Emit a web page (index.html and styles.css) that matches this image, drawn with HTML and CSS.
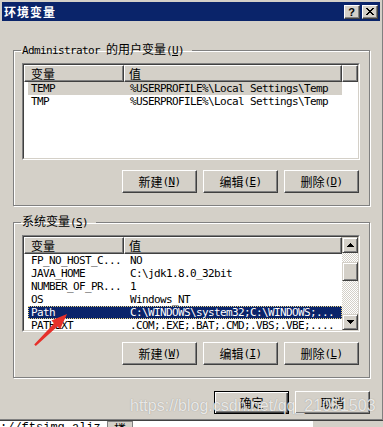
FILE: index.html
```html
<!DOCTYPE html>
<html lang="zh-CN">
<head>
<meta charset="utf-8">
<title>环境变量</title>
<link rel="stylesheet" href="styles.css">
</head>
<body>
<div class="window">
  <div class="titlebar">
    <span class="title">环境变量</span>
    <div class="tbtns">
      <span class="tbtn help">?</span>
      <span class="tbtn close"><svg width="8" height="7" viewBox="0 0 8 7" shape-rendering="crispEdges"><path d="M0 0h2v1h-2zM6 0h2v1h-2zM1 1h2v1h-2zM5 1h2v1h-2zM2 2h4v1h-4zM3 3h2v1h-2zM2 4h4v1h-4zM1 5h2v1h-2zM5 5h2v1h-2zM0 6h2v1h-2zM6 6h2v1h-2z" fill="#000"/></svg></span>
    </div>
  </div>
  <div class="dlg">
    <fieldset class="group">
      <legend><span class="m">Administrator </span>的用户变量<span class="m">(<u>U</u>)</span></legend>
      <div class="lv">
        <div class="lv-in">
          <div class="lv-main">
            <div class="lv-head"><span class="hc c1">变量</span><span class="hc c2">值</span><span class="hc fill"></span></div>
            <div class="row sel-gray"><span class="c1 m">TEMP</span><span class="c2 m">%USERPROFILE%\Local Settings\Temp</span></div>
            <div class="row"><span class="c1 m">TMP</span><span class="c2 m">%USERPROFILE%\Local Settings\Temp</span></div>
          </div>
        </div>
      </div>
      <div class="btnrow">
        <button class="btn">新建<span class="m">(<u>N</u>)</span></button>
        <button class="btn">编辑<span class="m">(<u>E</u>)</span></button>
        <button class="btn">删除<span class="m">(<u>D</u>)</span></button>
      </div>
    </fieldset>
    <fieldset class="group">
      <legend>系统变量<span class="m">(<u>S</u>)</span></legend>
      <div class="lv">
        <div class="lv-in">
          <div class="lv-main">
            <div class="lv-head"><span class="hc c1">变量</span><span class="hc c2">值</span></div>
            <div class="row"><span class="c1 m">FP_NO_HOST_C...</span><span class="c2 m">NO</span></div>
            <div class="row"><span class="c1 m">JAVA_HOME</span><span class="c2 m">C:\jdk1.8.0_32bit</span></div>
            <div class="row"><span class="c1 m">NUMBER_OF_PR...</span><span class="c2 m">1</span></div>
            <div class="row"><span class="c1 m">OS</span><span class="c2 m">Windows_NT</span></div>
            <div class="row sel"><span class="c1 m">Path</span><span class="c2 m">C:\WINDOWS\system32;C:\WINDOWS;...</span></div>
            <div class="row"><span class="c1 m">PATHEXT</span><span class="c2 m">.COM;.EXE;.BAT;.CMD;.VBS;.VBE;....</span></div>
          </div>
          <div class="sb">
            <span class="sbtn"><svg width="7" height="4" viewBox="0 0 7 4" shape-rendering="crispEdges"><path d="M3 0h1v1h-1zM2 1h3v1h-3zM1 2h5v1h-5zM0 3h7v1h-7z" fill="#000"/></svg></span>
            <div class="track"><div class="thumb"></div></div>
            <span class="sbtn"><svg width="7" height="4" viewBox="0 0 7 4" shape-rendering="crispEdges"><path d="M0 0h7v1h-7zM1 1h5v1h-5zM2 2h3v1h-3zM3 3h1v1h-1z" fill="#000"/></svg></span>
          </div>
        </div>
      </div>
      <div class="btnrow">
        <button class="btn">新建<span class="m">(<u>W</u>)</span></button>
        <button class="btn">编辑<span class="m">(<u>I</u>)</span></button>
        <button class="btn">删除<span class="m">(<u>L</u>)</span></button>
      </div>
    </fieldset>
    <div class="okrow">
      <button class="btn default">确定</button>
      <button class="btn">取消</button>
    </div>
  </div>
</div>
<div class="behind"><span class="b1">://ftsimg.aliz</span><span class="b2">楼</span><span class="b3"></span><span class="b4"></span></div>
<div class="watermark">https://blog.csdn.net/qq_21051503</div>
<svg class="arrow" width="40" height="40" viewBox="0 0 40 40"><polygon points="37,4 30.2,19.3 27.4,16.5 5.8,36 4.2,34.4 24.2,13.2 21.4,10.6" fill="#E6302A"/></svg>
</body>
</html>
```
FILE: styles.css
```css
* { box-sizing: border-box; }
html, body { margin: 0; padding: 0; }
body {
  width: 383px;
  height: 427px;
  overflow: hidden;
  position: relative;
  background: #fff;
  font-family: "Noto Sans CJK SC", sans-serif;
  font-size: 12px;
  color: #000;
}
.window {
  width: 386px;
  height: 423px;
  margin: -2px 0 0 -2px;
  background: #D4D0C8;
  border: 1px solid;
  border-color: #D4D0C8 #404040 #404040 #D4D0C8;
  box-shadow: inset 1px 1px #fff, inset -1px -1px #808080;
  padding: 3px;
  display: flex;
  flex-direction: column;
}
.titlebar {
  height: 19px;
  flex: none;
  background: #0A246A;
  display: flex;
  align-items: center;
  justify-content: space-between;
  padding: 0 2px;
}
.title {
  color: #fff;
  font-weight: 700;
  font-size: 12px;
  letter-spacing: 1px;
  line-height: 19px;
}
.tbtns { display: flex; gap: 2px; }
.tbtn {
  width: 16px;
  height: 14px;
  background: #D4D0C8;
  border: 1px solid;
  border-color: #fff #404040 #404040 #fff;
  box-shadow: inset -1px -1px #808080;
  display: flex;
  align-items: center;
  justify-content: center;
}
.help {
  font: bold 11px/12px "Liberation Sans", sans-serif;
  padding-right: 1px;
}
.dlg {
  flex: 1;
  padding: 22px 10px 0 11px;
}
fieldset.group {
  margin: 0;
  min-width: 0;
  padding: 6px 9px 12px 8px;
  border: 1px solid #808080;
  box-shadow: inset 1px 1px #fff, 1px 1px #fff;
}
fieldset.group + fieldset.group { margin-top: 9px; }
legend {
  padding: 0 8px 0 1px;
  margin-left: -1px;
  font-size: 12px;
  line-height: 12px;
  white-space: nowrap;
}
.m {
  font-family: "DejaVu Sans Mono", monospace;
  font-size: 11px;
  letter-spacing: -0.62px;
}
.lv {
  height: 97px;
  border: 1px solid;
  border-color: #808080 #fff #fff #808080;
}
.lv-in {
  height: 100%;
  border: 1px solid;
  border-color: #404040 #D4D0C8 #D4D0C8 #404040;
  background: #fff;
  display: flex;
  overflow: hidden;
}
.lv-main { flex: 1; min-width: 0; overflow: hidden; }
.lv-head { display: flex; height: 17px; }
.hc {
  height: 17px;
  background: #D4D0C8;
  border: 1px solid;
  border-color: #fff #404040 #404040 #fff;
  box-shadow: inset -1px -1px #808080;
  line-height: 15px;
  white-space: nowrap;
  flex: none;
}
.hc.c1 { width: 100px; padding-left: 6px; }
.hc.c2 { width: 218px; padding-left: 4px; }
.hc.fill { flex: 1; }
.row {
  display: flex;
  height: 13px;
  width: 314px;
  margin-left: 4px;
  line-height: 13px;
  white-space: nowrap;
}
.row .c1 { width: 96px; padding-left: 3px; overflow: hidden; flex: none; }
.row .c2 { width: 218px; padding-left: 6px; overflow: hidden; flex: none; }
.row.sel-gray { background: #D4D0C8; }
.row.sel {
  background: #0A246A;
  color: #fff;
  outline: 1px dotted #EBD57F;
  outline-offset: -1px;
}
.sb {
  width: 16px;
  flex: none;
  display: flex;
  flex-direction: column;
  background-color: #fff;
  background-image: conic-gradient(#D4D0C8 25%, #fff 0 50%, #D4D0C8 0 75%, #fff 0);
  background-size: 2px 2px;
}
.sbtn, .thumb {
  background: #D4D0C8;
  border: 1px solid;
  border-color: #D4D0C8 #404040 #404040 #D4D0C8;
  box-shadow: inset 1px 1px #fff, inset -1px -1px #808080;
}
.sbtn {
  width: 16px;
  height: 16px;
  flex: none;
  display: flex;
  align-items: center;
  justify-content: center;
}
.track { flex: 1; }
.thumb { height: 19px; margin-top: 9px; }
.btnrow {
  display: flex;
  justify-content: flex-end;
  gap: 6px;
  margin-top: 10px;
  padding-right: 1px;
}
.okrow {
  display: flex;
  justify-content: flex-end;
  gap: 6px;
  margin-top: 13px;
}
.btn {
  width: 75px;
  height: 23px;
  padding: 0;
  margin: 0;
  background: #D4D0C8;
  border: 1px solid;
  border-color: #fff #404040 #404040 #fff;
  box-shadow: inset -1px -1px #808080;
  font-family: "Noto Sans CJK SC", sans-serif;
  font-size: 12px;
  line-height: 12px;
  color: #000;
  display: flex;
  align-items: center;
  justify-content: center;
}
.btn.default {
  border-color: #000;
  box-shadow: inset 1px 1px #fff, inset -1px -1px #404040, inset -2px -2px #808080;
}
.behind {
  display: flex;
  height: 6px;
  background: #fff;
  overflow: hidden;
}
.b1 {
  width: 107px;
  flex: none;
  font: 12px/12px "Liberation Mono", monospace;
  padding-top: 1px;
}
.b2 {
  width: 26px;
  flex: none;
  background: #D4D0C8;
  border: 1px solid #808080;
  border-bottom: 0;
  font-size: 12px;
  line-height: 12px;
  padding: 1px 0 0 6px;
}
.b3 { width: 180px; flex: none; background: #fff; }
.b4 { flex: 1; background: #D4D0C8; }
.watermark {
  position: absolute;
  left: 130px;
  top: 398px;
  font: 16px/16px "Liberation Sans", sans-serif;
  color: rgba(255, 255, 255, 0.78);
  text-shadow: 0 0 1px rgba(90, 90, 90, 0.55);
  white-space: nowrap;
}
.arrow {
  position: absolute;
  left: 30px;
  top: 310px;
}
```
